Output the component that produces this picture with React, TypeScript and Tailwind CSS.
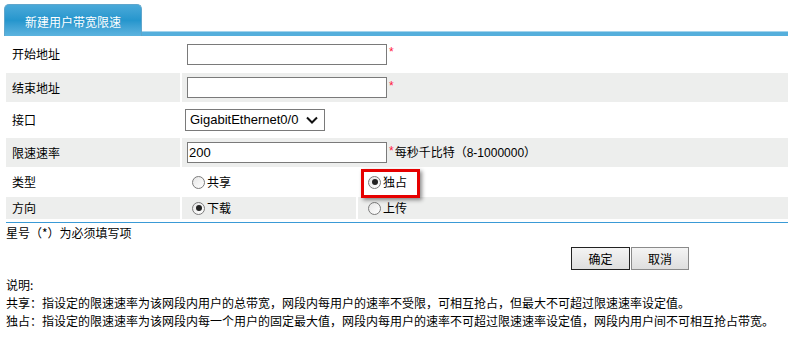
import React from "react";

function Radio({ checked }: { checked?: boolean }) {
  return (
    <span className="inline-flex items-center justify-center w-[13px] h-[13px] rounded-full border border-[#7b7b7b] bg-gradient-to-br from-[#e6e6e6] to-white shrink-0">
      {checked && <span className="block w-[6px] h-[6px] rounded-full bg-[#222]" />}
    </span>
  );
}

function Star() {
  return <span className="text-[#ff1a3c] text-[12px] leading-none ml-[2px] -mt-[4px] font-['Liberation_Sans',sans-serif]">*</span>;
}

function TextBox({ value }: { value?: string }) {
  return (
    <div className="w-[200px] h-[21px] border border-[#7a7a7a] bg-white flex items-center pl-[1px] text-[13px] text-black font-['Liberation_Sans',sans-serif]">
      {value}
    </div>
  );
}

function App() {
  return (
    <div className="w-[788px] h-[351px] bg-white text-black text-[12px] font-['Noto_Sans_CJK_SC','Noto_Sans',sans-serif] overflow-hidden">
      {/* tab header */}
      <div className="flex items-end h-[36px] pl-[4px] pt-[4px]">
        <div className="w-[138px] h-[32px] rounded-t-[5px] border border-b-0 border-[#5fa6cc] bg-gradient-to-b from-[#49a9d9] via-[#2596cd] to-[#5cb4df] flex items-center justify-center text-white text-[12px] pt-[2px]">
          新建用户带宽限速
        </div>
        <div className="flex-1 h-[5px] border-t border-[#a3d3ec] bg-[#55afdc]" />
      </div>

      {/* form table */}
      <div className="flex flex-col gap-[2px] pl-[6px] pt-[1px]">
        <div className="flex gap-[2px] h-[34px]">
          <div className="w-[174px] pl-[6px] flex items-center">开始地址</div>
          <div className="flex-1 pl-[5px] flex items-center">
            <TextBox />
            <Star />
          </div>
        </div>
        <div className="flex gap-[2px] h-[29px]">
          <div className="w-[174px] pl-[6px] flex items-center bg-[#edeeed]">结束地址</div>
          <div className="flex-1 pl-[5px] flex items-center bg-[#edeeed]">
            <TextBox />
            <Star />
          </div>
        </div>
        <div className="flex gap-[2px] h-[32px]">
          <div className="w-[174px] pl-[6px] flex items-center">接口</div>
          <div className="flex-1 pl-[3px] flex items-center">
            <div className="w-[140px] h-[22px] border border-[#7a7a7a] bg-white flex items-center justify-between pl-[4px] pr-[6px] text-[13px] font-['Liberation_Sans',sans-serif]">
              <span>GigabitEthernet0/0</span>
              <svg width="12" height="8" viewBox="0 0 12 8">
                <path d="M1 1.5 L6 6.5 L11 1.5" fill="none" stroke="#111" strokeWidth="2" />
              </svg>
            </div>
          </div>
        </div>
        <div className="flex gap-[2px] h-[29px]">
          <div className="w-[174px] pl-[6px] flex items-center bg-[#edeeed]">限速速率</div>
          <div className="flex-1 pl-[5px] flex items-center bg-[#edeeed]">
            <TextBox value="200" />
            <Star />
            <span className="ml-[1px]">
              每秒千比特（<span className="font-['Liberation_Sans',sans-serif]">8-1000000</span>）
            </span>
          </div>
        </div>
        <div className="flex gap-[2px] h-[26px]">
          <div className="w-[174px] pl-[6px] flex items-center">类型</div>
          <div className="w-[174px] pl-[10px] flex items-center gap-[2px]">
            <Radio />
            <span>共享</span>
          </div>
          <div className="flex-1 pl-[10px] flex items-center gap-[2px] relative">
            <Radio checked />
            <span>独占</span>
            <div className="absolute left-[3px] top-0 w-[59px] h-[29px] border-[3px] border-[#e60000] shadow-[2px_2px_4px_rgba(0,0,0,0.45)]" />
          </div>
        </div>
        <div className="flex gap-[2px] h-[22px]">
          <div className="w-[174px] pl-[6px] flex items-center bg-[#edeeed]">方向</div>
          <div className="w-[174px] pl-[10px] flex items-center gap-[2px] bg-[#edeeed]">
            <Radio checked />
            <span>下载</span>
          </div>
          <div className="flex-1 pl-[10px] flex items-center gap-[2px] bg-[#edeeed]">
            <Radio />
            <span>上传</span>
          </div>
        </div>
      </div>

      <div className="ml-[6px] mt-[3px] h-[1px] bg-[#3a9ad6]" />

      <div className="pl-[6px] mt-[2px] leading-[16px]">星号（*）为必须填写项</div>

      <div className="flex gap-[1px] pl-[571px] mt-[6px]">
        <button className="w-[59px] h-[23px] border border-[#222] bg-gradient-to-b from-[#f4f4f4] to-[#dedede] text-[12px]">确定</button>
        <button className="w-[58px] h-[23px] border border-[#8a8a8a] bg-gradient-to-b from-[#f4f4f4] to-[#dedede] text-[12px]">取消</button>
      </div>

      <div className="pl-[6px] mt-[6px] leading-[18px]">
        <p>说明:</p>
        <p>共享：指设定的限速速率为该网段内用户的总带宽，网段内每用户的速率不受限，可相互抢占，但最大不可超过限速速率设定值。</p>
        <p>独占：指设定的限速速率为该网段内每一个用户的固定最大值，网段内每用户的速率不可超过限速速率设定值，网段内用户间不可相互抢占带宽。</p>
      </div>
    </div>
  );
}

export default App;
